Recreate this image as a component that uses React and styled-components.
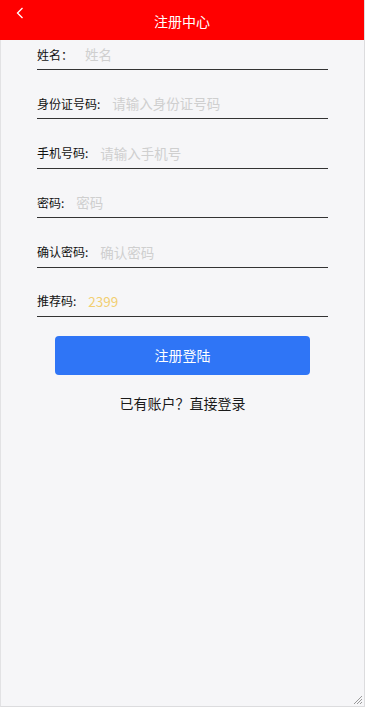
import React from "react";
import styled, { createGlobalStyle } from "styled-components";

const GlobalStyle = createGlobalStyle`
  html, body {
    margin: 0;
    padding: 0;
    background: #fff;
  }
  body {
    font-family: "Microsoft YaHei", "Noto Sans CJK SC", "Noto Sans", sans-serif;
  }
  * {
    box-sizing: border-box;
  }
`;

const fields = [
  { label: "姓名：", placeholder: "姓名" },
  { label: "身份证号码:", placeholder: "请输入身份证号码" },
  { label: "手机号码:", placeholder: "请输入手机号" },
  { label: "密码:", placeholder: "密码", type: "password" },
  { label: "确认密码:", placeholder: "确认密码", type: "password" },
  { label: "推荐码:", value: "2399" },
];

const Register = () => {
  return (
    <Frame>
      <Header>
        <BackButton aria-label="返回">
          <svg width="10" height="14" viewBox="0 0 10 14">
            <path
              d="M7.5 2 L2.5 7 L7.5 12"
              fill="none"
              stroke="#fff"
              strokeWidth="1.3"
            />
          </svg>
        </BackButton>
        <Title>注册中心</Title>
      </Header>

      <Form>
        {fields.map((f) => (
          <Row key={f.label}>
            <Label>{f.label}</Label>
            <Input
              type={f.type || "text"}
              placeholder={f.placeholder}
              defaultValue={f.value}
              $filled={!!f.value}
            />
          </Row>
        ))}
      </Form>

      <SubmitButton>注册登陆</SubmitButton>
      <LoginLink>已有账户？直接登录</LoginLink>

      <Grip>
        <svg width="12" height="12" viewBox="0 0 12 12">
          <path
            d="M11 3 L3 11 M11 6 L6 11 M11 9 L9 11"
            stroke="#9a9a9a"
            strokeWidth="1"
          />
        </svg>
      </Grip>
    </Frame>
  );
};

const Frame = styled.div`
  position: relative;
  width: 365px;
  height: 707px;
  background: #f6f6f8;
  border-left: 1px solid #e2e2e4;
  border-right: 1px solid #dcdcde;
  border-bottom: 1px solid #dcdcde;
  display: flex;
  flex-direction: column;
  align-items: center;
`;

const Header = styled.div`
  position: relative;
  width: calc(100% + 1px);
  margin-left: -1px;
  height: 40px;
  background: #ff0000;
  display: flex;
  align-items: center;
  justify-content: center;
`;

const BackButton = styled.span`
  position: absolute;
  left: 15px;
  top: 6px;
  display: flex;
`;

const Title = styled.h1`
  margin: 2px 0 0;
  font-size: 14px;
  font-weight: normal;
  color: #fff;
`;

const Form = styled.div`
  width: 291px;
  margin-top: 1px;
  display: flex;
  flex-direction: column;
  gap: 20.4px;
`;

const Row = styled.div`
  display: flex;
  align-items: center;
  height: 29px;
  border-bottom: 1px solid #333;
  padding-bottom: 2px;
`;

const Label = styled.span`
  flex-shrink: 0;
  font-size: 12px;
  color: #111;
  margin-right: 12px;
`;

const Input = styled.input`
  flex: 1;
  min-width: 0;
  border: none;
  outline: none;
  background: transparent;
  font-family: inherit;
  font-size: 13.5px;
  padding: 0;
  color: ${(p) => (p.$filled ? "#f2cf72" : "#333")};

  &::placeholder {
    color: #cfcfcf;
  }
`;

const SubmitButton = styled.button`
  margin-top: 19px;
  width: 255px;
  height: 39px;
  border: none;
  border-radius: 4px;
  background: #2f75f6;
  color: #fff;
  font-family: inherit;
  font-size: 14px;
  cursor: pointer;
`;

const LoginLink = styled.a`
  margin-top: 18px;
  font-size: 14px;
  color: #1a1a1a;
  cursor: pointer;
`;

const Grip = styled.span`
  position: absolute;
  right: 1px;
  bottom: 1px;
  display: flex;
`;

export default function App() {
  return (
    <>
      <GlobalStyle />
      <Register />
    </>
  );
}
